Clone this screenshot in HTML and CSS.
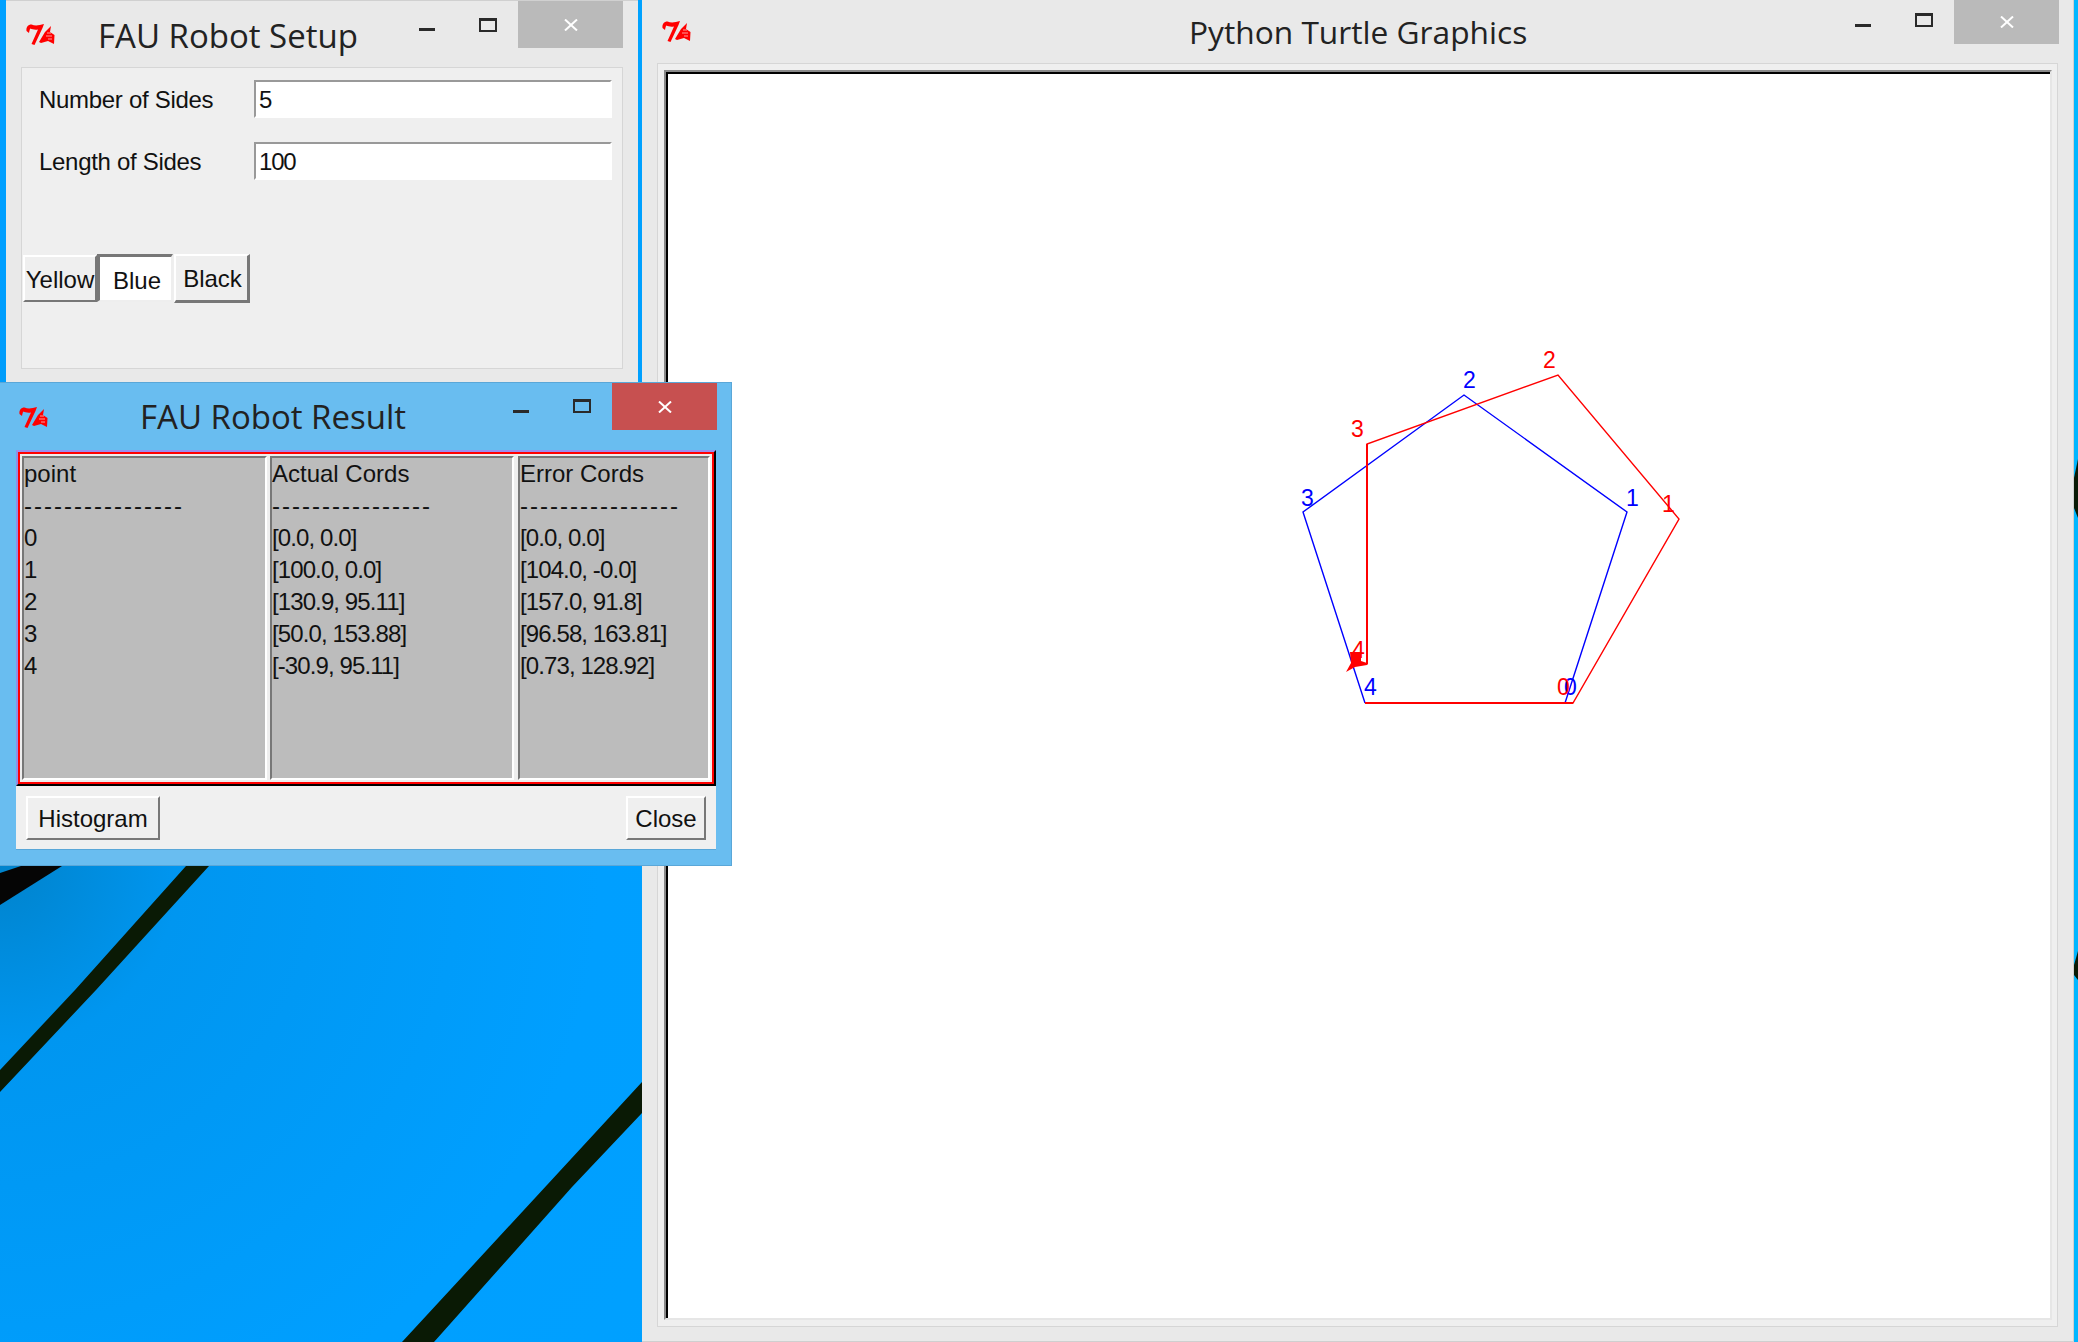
FILE: index.html
```html
<!DOCTYPE html>
<html lang="en">
<head>
    <meta charset="UTF-8">
    <title>FAU Robot</title>
    <link rel="stylesheet" href="styles.css">
</head>
<body>
    <svg width="0" height="0" class="defs">
        <symbol id="tk" viewBox="0 0 29 23">
            <path d="M0.5 8 C0 4 2 1.5 5.5 1.5 C9 3 13 2.5 18 1 L16.5 5 L8.5 22 L5.5 21 L12 6.5 C9 7 6 6.5 4.5 5.5 C3.5 6.5 3.5 8 3 10 Z" fill="#f00"/>
            <path d="M13 19 L19 9 L25 3 L24 9 L28.5 12 L28 21 L22 18 L15 20 Z" fill="#f00"/>
            <path d="M21 10 L25 10 M20 13 L26 13 M22 16 L26 16" stroke="#ff9a9a" stroke-width="1"/>
        </symbol>
        <symbol id="close-x" viewBox="0 0 14 12">
            <path d="M1 0.5 L13 11.5 M13 0.5 L1 11.5" stroke="#fff" stroke-width="2" fill="none"/>
        </symbol>
    </svg>

    <!-- wallpaper -->
    <svg class="wallpaper" width="2078" height="1342" viewBox="0 0 2078 1342">
        <polygon points="0,873 21,866 62,866 0,905" fill="#050505"/>
        <polygon points="186,866 209,866 96,990 0,1092 0,1070 75,990" fill="#0a1a05"/>
        <polygon points="642,1082 642,1113 572,1187 434,1342 402,1342 547,1185" fill="#0a1a05"/>
        <polygon points="2078,459 2074,478 2074,508 2078,518" fill="#0a1a05"/>
        <polygon points="2078,951 2074,965 2074,975 2078,980" fill="#0a1a05"/>
    </svg>

    <!-- turtle window -->
    <div class="window turtle-window">
        <div class="titlebar">
            <svg class="tk-icon"><use href="#tk"/></svg>
            <span class="title">Python Turtle Graphics</span>
            <div class="controls">
                <span class="ctl-min"></span>
                <span class="ctl-max"></span>
                <span class="ctl-close"><svg class="x-icon"><use href="#close-x"/></svg></span>
            </div>
        </div>
        <div class="canvas-panel">
            <div class="canvas-edge">
                <div class="canvas">
                    <svg width="1382" height="1244" viewBox="668 74 1382 1244">
                        <polyline class="path-blue" points="1365,703 1565,703 1627,512 1464,395 1303,512 1365,703"/>
                        <polyline class="path-red" points="1365,703 1573,703 1679,519 1558,375 1367,444 1367,664 1355,664"/>
                        <line class="path-red-thick" x1="1365" y1="703" x2="1573" y2="703"/>
                        <line class="path-red-thick" x1="1367" y1="444" x2="1367" y2="664"/>
                        <polygon points="1350,652 1361,652 1361,661 1367,663 1367,665 1355,667 1346,672 1351,663" fill="#f00"/>
                        <text class="lbl-blue" x="1463" y="388">2</text>
                        <text class="lbl-blue" x="1626" y="506">1</text>
                        <text class="lbl-blue" x="1301" y="506">3</text>
                        <text class="lbl-blue" x="1364" y="695">4</text>
                        <text class="lbl-blue" x="1564" y="695">0</text>
                        <text class="lbl-red" x="1543" y="368">2</text>
                        <text class="lbl-red" x="1351" y="437">3</text>
                        <text class="lbl-red" x="1662" y="512">1</text>
                        <text class="lbl-red" x="1352" y="658">4</text>
                        <text class="lbl-red" x="1557" y="695">0</text>
                    </svg>
                </div>
            </div>
        </div>
    </div>

    <!-- setup window -->
    <div class="window setup-window">
        <div class="titlebar">
            <svg class="tk-icon"><use href="#tk"/></svg>
            <span class="title">FAU Robot Setup</span>
            <div class="controls">
                <span class="ctl-min"></span>
                <span class="ctl-max"></span>
                <span class="ctl-close"><svg class="x-icon"><use href="#close-x"/></svg></span>
            </div>
        </div>
        <div class="setup-panel">
            <div class="form-row">
                <label for="sides">Number of Sides</label>
                <input id="sides" type="text" value="5">
            </div>
            <div class="form-row">
                <label for="length">Length of Sides</label>
                <input id="length" type="text" value="100">
            </div>
            <div class="color-buttons">
                <button class="tk-btn btn-yellow">Yellow</button>
                <button class="tk-btn btn-blue">Blue</button>
                <button class="tk-btn btn-black">Black</button>
            </div>
        </div>
    </div>

    <!-- result window -->
    <div class="window result-window">
        <div class="titlebar">
            <svg class="tk-icon"><use href="#tk"/></svg>
            <span class="title">FAU Robot Result</span>
            <div class="controls">
                <span class="ctl-min"></span>
                <span class="ctl-max"></span>
                <span class="ctl-close"><svg class="x-icon"><use href="#close-x"/></svg></span>
            </div>
        </div>
        <div class="result-body">
            <div class="table-outer">
                <div class="table-red">
                    <div class="col col-point">
                        <div>point</div>
                        <div class="dashes">----------------</div>
                        <div class="num">0</div>
                        <div class="num">1</div>
                        <div class="num">2</div>
                        <div class="num">3</div>
                        <div class="num">4</div>
                    </div>
                    <div class="col col-actual">
                        <div>Actual Cords</div>
                        <div class="dashes">----------------</div>
                        <div class="num">[0.0, 0.0]</div>
                        <div class="num">[100.0, 0.0]</div>
                        <div class="num">[130.9, 95.11]</div>
                        <div class="num">[50.0, 153.88]</div>
                        <div class="num">[-30.9, 95.11]</div>
                    </div>
                    <div class="col col-error">
                        <div>Error Cords</div>
                        <div class="dashes">----------------</div>
                        <div class="num">[0.0, 0.0]</div>
                        <div class="num">[104.0, -0.0]</div>
                        <div class="num">[157.0, 91.8]</div>
                        <div class="num">[96.58, 163.81]</div>
                        <div class="num">[0.73, 128.92]</div>
                    </div>
                </div>
            </div>
            <div class="result-actions">
                <button class="tk-btn btn-histogram">Histogram</button>
                <button class="tk-btn btn-close">Close</button>
            </div>
        </div>
    </div>
</body>
</html>
```

FILE: styles.css
```css
* {
    box-sizing: border-box;
}
body {
    margin: 0;
    width: 2078px;
    height: 1342px;
    overflow: hidden;
    position: relative;
    font-family: "Liberation Sans", sans-serif;
    font-size: 24px;
    color: #111;
    background: radial-gradient(circle at 0 866px, #0083cc 0, #0096f0 180px, #009fff 600px, #00a4ff 1400px, #00b6ff 2078px);
}
.defs {
    position: absolute;
}
.wallpaper {
    position: absolute;
    left: 0;
    top: 0;
}
.window {
    position: absolute;
    display: flex;
    flex-direction: column;
    background: #e9e9e9;
}
.titlebar {
    display: flex;
    align-items: flex-start;
    flex-shrink: 0;
}
.tk-icon {
    flex-shrink: 0;
    width: 29px;
    height: 23px;
}
.title {
    font-family: "Open Sans", sans-serif;
    font-size: 33px;
    line-height: 44px;
    color: #222;
    white-space: nowrap;
}
.controls {
    margin-left: auto;
    display: flex;
    align-items: flex-start;
}
.ctl-min {
    width: 16px;
    height: 3px;
    margin-top: 24px;
    background: #2a2a2a;
}
.ctl-max {
    width: 18px;
    height: 14px;
    margin-top: 13px;
    margin-left: 44px;
    border: 2px solid #2a2a2a;
    border-top-width: 3px;
}
.ctl-close {
    width: 105px;
    height: 44px;
    margin-left: 21px;
    display: flex;
    align-items: center;
    justify-content: center;
    background: #bababa;
}
.x-icon {
    width: 14px;
    height: 12px;
}

/* turtle */
.turtle-window {
    left: 642px;
    top: 0;
    width: 1432px;
    height: 1342px;
    border-right: 1px solid #cfcfcf;
    border-bottom: 1px solid #cfcfcf;
}
.turtle-window .titlebar {
    height: 63px;
    padding-right: 14px;
}
.turtle-window .tk-icon {
    margin: 20px 0 0 20px;
}
.turtle-window .title {
    margin: 10px 0 0 498px;
    font-size: 31.7px;
}
.canvas-panel {
    flex: 1;
    margin: 0 15px 14px 15px;
    padding: 6px 5px 6px 6px;
    display: flex;
    background: #efefef;
    border: 1px solid #d6d6d6;
}
.canvas-edge {
    flex: 1;
    display: flex;
    border: 2px solid;
    border-color: #8a8a8a #e6e6e6 #e6e6e6 #8a8a8a;
}
.canvas {
    flex: 1;
    background: #fff;
    border-top: 2px solid #000;
    border-left: 2px solid #000;
}
.canvas svg {
    display: block;
}
.path-blue,
.path-red {
    fill: none;
    stroke-width: 1.4;
}
.path-blue {
    stroke: #00f;
}
.path-red {
    stroke: #f00;
}
.path-red-thick {
    stroke: #f00;
    stroke-width: 2;
}
.lbl-blue,
.lbl-red {
    font-family: "Liberation Sans", sans-serif;
    font-size: 23px;
}
.lbl-blue {
    fill: #00f;
}
.lbl-red {
    fill: #f00;
}

/* setup */
.setup-window {
    left: 6px;
    top: 0;
    width: 632px;
    height: 382px;
    border-top: 1px solid #d0d0d0;
}
.setup-window .titlebar {
    height: 66px;
    padding-right: 15px;
}
.setup-window .tk-icon {
    margin: 22px 0 0 20px;
}
.setup-window .title {
    margin: 13px 0 0 43px;
}
.setup-window .ctl-min {
    margin-top: 27px;
}
.setup-window .ctl-max {
    margin-top: 17px;
}
.setup-window .ctl-close {
    height: 47px;
}
.setup-panel {
    margin: 0 15px;
    height: 302px;
    padding: 12px 0 0 1px;
    background: #efefef;
    border: 1px solid #d6d6d6;
}
.form-row {
    display: flex;
    align-items: center;
    height: 38px;
    margin-bottom: 24px;
    padding-left: 16px;
}
.form-row label {
    width: 215px;
    flex-shrink: 0;
    letter-spacing: -0.3px;
    padding-top: 1px;
}
.form-row input {
    width: 358px;
    height: 38px;
    padding: 1px 0 0 3px;
    font: inherit;
    letter-spacing: -1.2px;
    color: #111;
    background: #fff;
    border: 2px solid #fff;
    border-top-color: #999;
    border-left-color: #999;
    outline: none;
}
.color-buttons {
    display: flex;
    align-items: flex-start;
    margin-top: 74px;
}
.tk-btn {
    padding: 2px 0 0;
    font: inherit;
    color: #111;
    background: #efefef;
    border: 2px solid;
    border-color: #fff #777 #777 #fff;
}
.btn-yellow {
    width: 74px;
    height: 47px;
    margin-top: 1px;
    overflow: hidden;
}
.btn-blue {
    width: 76px;
    height: 48px;
    padding: 5px 0 0 3px;
    background: #fff;
    border-width: 3px 2px 2px 3px;
    border-color: #777 #eee #eee #777;
}
.btn-black {
    width: 76px;
    height: 49px;
    margin-left: 1px;
    padding-left: 2px;
    border-width: 2px 3px 3px 2px;
}

/* result */
.result-window {
    left: 0;
    top: 382px;
    width: 732px;
    height: 484px;
    background: #69bdf0;
    border: 1px solid #5aa7d8;
    border-left: none;
}
.result-window .titlebar {
    height: 67px;
    padding-right: 14px;
}
.result-window .tk-icon {
    margin: 23px 0 0 19px;
}
.result-window .title {
    margin: 12px 0 0 92px;
}
.result-window .ctl-min {
    margin-top: 27px;
}
.result-window .ctl-max {
    margin-top: 16px;
}
.result-window .ctl-close {
    height: 47px;
    background: #c75050;
}
.result-body {
    margin: 0 15px 0 16px;
    height: 400px;
    background: #f0f0f0;
    border-bottom: 1px solid #5aa7d8;
}
.table-outer {
    border: 2px solid;
    border-color: #9a90ee #000 #000 #8f8fe6;
}
.table-red {
    display: grid;
    grid-template-columns: 245px 244px 193px;
    column-gap: 3px;
    height: 332px;
    padding: 2px;
    background: #eee;
    border: 2px solid #f00;
}
.col {
    line-height: 32px;
    white-space: nowrap;
    overflow: hidden;
    background: #bcbcbc;
    border: 2px solid;
    border-color: #777 #fff #fff #777;
}
.col-error {
    margin-left: 1px;
}
.dashes {
    letter-spacing: 2px;
}
.num {
    letter-spacing: -0.9px;
}
.result-actions {
    display: flex;
    justify-content: space-between;
    padding: 10px;
}
.btn-histogram {
    width: 134px;
    height: 44px;
}
.btn-close {
    width: 80px;
    height: 44px;
}
```
